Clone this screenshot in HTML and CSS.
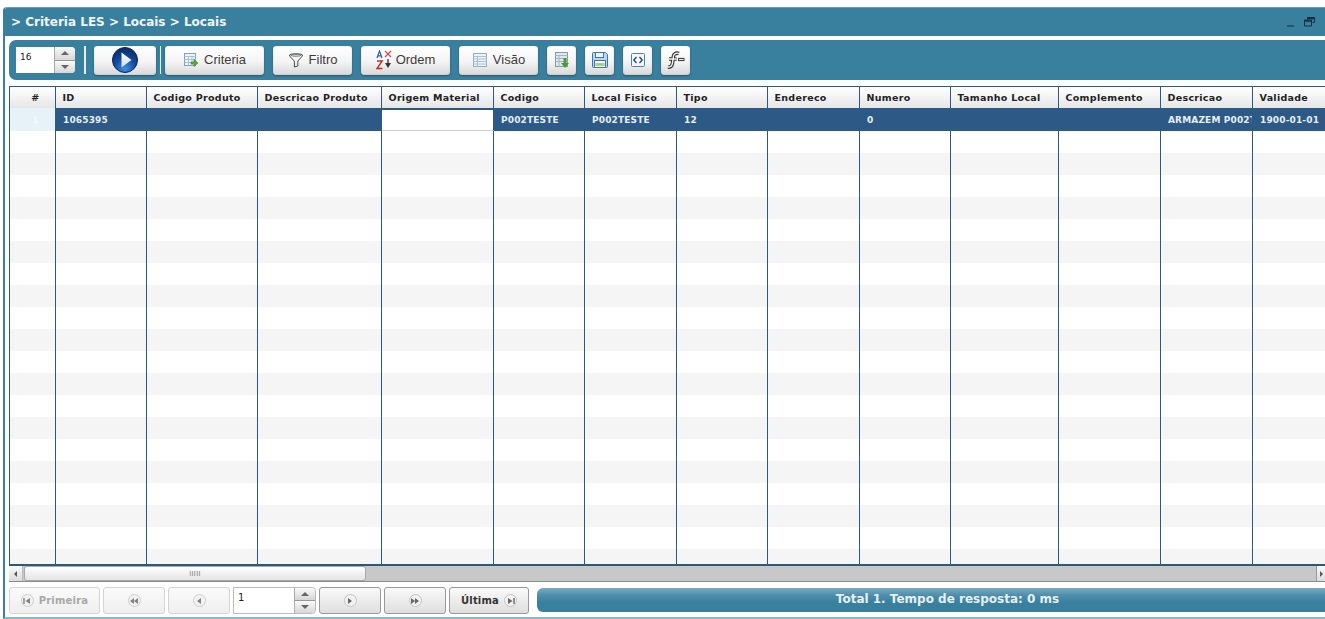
FILE: index.html
```html
<!DOCTYPE html>
<html lang="pt">
<head>
<meta charset="utf-8">
<title>Criteria LES</title>
<link rel="stylesheet" href="styles.css">
</head>
<body>
<div class="panel">
  <header class="title">
    <span class="title-text">&gt; Criteria LES &gt; Locais &gt; Locais</span>
    <span class="win-tools">
      <svg width="10" height="10" viewBox="0 0 10 10"><path d="M1 9h7" stroke="#12303f" stroke-width="1"/></svg>
      <svg width="11" height="10" viewBox="0 0 11 10"><path d="M3.500 2.500V.5h7v5h-2M.5 3h7v6h-7z" fill="none" stroke="#12303f"/><path d="M3 1.500h7M0 4h8" stroke="#12303f" stroke-width="1.400"/></svg>
    </span>
  </header>

  <div class="toolbar">
    <div class="spin spin-top">
      <span class="spin-value">16</span>
      <span class="spin-btns">
        <span class="spin-btn"><i class="arrow-up"></i></span>
        <span class="spin-btn"><i class="arrow-down"></i></span>
      </span>
    </div>
    <span class="sep sep-a"></span>
    <button class="btn btn-run">
      <svg width="28" height="28" viewBox="0 0 28 28">
        <defs>
          <radialGradient id="ballg" cx=".5" cy=".85" r=".85"><stop offset="0" stop-color="#3f8fe6"/><stop offset=".5" stop-color="#124a9e"/><stop offset="1" stop-color="#0a2a63"/></radialGradient>
          <linearGradient id="playg" x1="0" y1="0" x2="0" y2="1"><stop offset="0" stop-color="#ffffff"/><stop offset="1" stop-color="#cfe0f5"/></linearGradient>
        </defs>
        <circle cx="14" cy="14" r="12.500" fill="url(#ballg)" stroke="#0b2452"/>
        <path d="M10.500 6.500 20.500 14 10.500 21.500z" fill="url(#playg)"/>
      </svg>
    </button>
    <span class="sep sep-b"></span>
    <button class="btn btn-criteria">
      <svg width="16" height="16" viewBox="0 0 16 16"><rect x="1.500" y="1.500" width="11" height="12" fill="#eef3f8" stroke="#7f9fbf"/><path d="M1.500 4.500h11M1.500 7.500h11M1.500 10.500h11M5.500 4.500v9M9 4.500v9" stroke="#a9c0d6"/><path d="M8 10h3V7.500l4 3.500-4 3.500V12H8z" fill="#5aa83a" stroke="#3d7f24" stroke-width=".6"/></svg>
      <span class="btn-label">Criteria</span>
    </button>
    <button class="btn btn-filtro">
      <svg width="16" height="16" viewBox="0 0 16 16"><path d="M1.500 3C1.500 1.500 14.500 1.500 14.500 3 14.500 5 10 8 9.800 9.500V14L6.400 15V9.500C6 8 1.500 5 1.500 3z" fill="#f4f4f4" stroke="#444"/><ellipse cx="8" cy="3.200" rx="5" ry="1" fill="none" stroke="#777"/></svg>
      <span class="btn-label">Filtro</span>
    </button>
    <button class="btn btn-ordem">
      <svg width="16" height="20" viewBox="0 0 16 20"><path d="M1 8 3.500 1 6 8M2 5.800h3" fill="none" stroke="#2a5fb8" stroke-width="1.200"/><path d="M1 11h5.200L1 18.500h5.400" fill="none" stroke="#c02a2a" stroke-width="1.400"/><path d="M9 1l6 6M15 1 9 7" stroke="#c04a4a" stroke-width="1.100"/><path d="M12 9v5" stroke="#333" stroke-width="1.300"/><path d="M9 13h6L12 18z" fill="#333"/></svg>
      <span class="btn-label">Ordem</span>
    </button>
    <button class="btn btn-visao">
      <svg width="16" height="16" viewBox="0 0 16 16"><rect x="1.500" y="1.500" width="13" height="13" fill="#eef3f8" stroke="#8fb0cc"/><path d="M1.500 4.500h13M1.500 7h13M1.500 9.500h13M1.500 12h13M5.500 4.500v10" stroke="#a9c0d6"/></svg>
      <span class="btn-label">Visão</span>
    </button>
    <button class="btn btn-icon">
      <svg width="16" height="18" viewBox="0 0 16 18"><rect x="1.500" y="1.500" width="12" height="14" fill="#dfe8ef" stroke="#7f9fa8"/><path d="M1.500 4.500h12M1.500 7.500h12M1.500 10.500h12M5 4.500v11" stroke="#a3b8c4"/><path d="M9.500 7h3v5H15l-4 5-4-5h2.500z" fill="#4f9a35"/></svg>
    </button>
    <button class="btn btn-icon">
      <svg width="18" height="18" viewBox="0 0 18 18"><path d="M1.500 2.500a1 1 0 0 1 1-1h12l2 2v12a1 1 0 0 1-1 1h-13a1 1 0 0 1-1-1z" fill="#bcd6f2" stroke="#3f74b5"/><rect x="4.500" y="1.500" width="8" height="5" fill="#eef5fc" stroke="#3f74b5"/><rect x="3.500" y="9.500" width="11" height="7" fill="#fff" stroke="#3f74b5"/><rect x="4.500" y="12" width="9" height="3" fill="#a6d07a"/></svg>
    </button>
    <button class="btn btn-icon">
      <svg width="16" height="16" viewBox="0 0 16 16"><rect x="1.500" y="1.500" width="13" height="13" rx="1" fill="#f3f7fc" stroke="#4f7fb8"/><path d="M6.500 5 3.800 8l2.700 3M9.500 5l2.700 3-2.700 3" fill="none" stroke="#23406b" stroke-width="1.300"/></svg>
    </button>
    <button class="btn btn-icon">
      <svg width="20" height="18" viewBox="0 0 20 18">
        <path d="M2 16c3 .5 4-1 4.500-4l1-7c.3-2 2.500-3.500 5.500-2.500M3 8h7.500" fill="none" stroke="#333" stroke-width="3.600"/>
        <path d="M2 16c3 .5 4-1 4.500-4l1-7c.3-2 2.500-3.500 5.500-2.500M3 8h7.500" fill="none" stroke="#f4f4f4" stroke-width="1.400"/>
        <path d="M12 8.500h6.500" stroke="#333" stroke-width="3.200"/>
        <path d="M12.800 8.500h4.900" stroke="#e8e8e8" stroke-width="1.200"/>
      </svg>
    </button>
  </div>

  <div class="grid">
    <table class="data">
      <colgroup>
        <col class="c1"><col class="c2"><col class="c3"><col class="c4"><col class="c5"><col class="c6"><col class="c7"><col class="c8"><col class="c9"><col class="c10"><col class="c11"><col class="c12"><col class="c13"><col class="c14">
      </colgroup>
      <thead>
        <tr><th class="num">#</th><th>ID</th><th>Codigo Produto</th><th>Descricao Produto</th><th>Origem Material</th><th>Codigo</th><th>Local Fisico</th><th>Tipo</th><th>Endereco</th><th>Numero</th><th>Tamanho Local</th><th>Complemento</th><th>Descricao</th><th>Validade</th></tr>
      </thead>
      <tbody>
        <tr class="selected"><td class="num">1</td><td>1065395</td><td></td><td></td><td class="active"></td><td>P002TESTE</td><td>P002TESTE</td><td>12</td><td></td><td>0</td><td></td><td></td><td class="clip">ARMAZEM P002TESTE</td><td>1900-01-01</td></tr>
        <tr><td class="num"></td><td></td><td></td><td></td><td></td><td></td><td></td><td></td><td></td><td></td><td></td><td></td><td></td><td></td></tr>
        <tr><td class="num"></td><td></td><td></td><td></td><td></td><td></td><td></td><td></td><td></td><td></td><td></td><td></td><td></td><td></td></tr>
        <tr><td class="num"></td><td></td><td></td><td></td><td></td><td></td><td></td><td></td><td></td><td></td><td></td><td></td><td></td><td></td></tr>
        <tr><td class="num"></td><td></td><td></td><td></td><td></td><td></td><td></td><td></td><td></td><td></td><td></td><td></td><td></td><td></td></tr>
        <tr><td class="num"></td><td></td><td></td><td></td><td></td><td></td><td></td><td></td><td></td><td></td><td></td><td></td><td></td><td></td></tr>
        <tr><td class="num"></td><td></td><td></td><td></td><td></td><td></td><td></td><td></td><td></td><td></td><td></td><td></td><td></td><td></td></tr>
        <tr><td class="num"></td><td></td><td></td><td></td><td></td><td></td><td></td><td></td><td></td><td></td><td></td><td></td><td></td><td></td></tr>
        <tr><td class="num"></td><td></td><td></td><td></td><td></td><td></td><td></td><td></td><td></td><td></td><td></td><td></td><td></td><td></td></tr>
        <tr><td class="num"></td><td></td><td></td><td></td><td></td><td></td><td></td><td></td><td></td><td></td><td></td><td></td><td></td><td></td></tr>
        <tr><td class="num"></td><td></td><td></td><td></td><td></td><td></td><td></td><td></td><td></td><td></td><td></td><td></td><td></td><td></td></tr>
        <tr><td class="num"></td><td></td><td></td><td></td><td></td><td></td><td></td><td></td><td></td><td></td><td></td><td></td><td></td><td></td></tr>
        <tr><td class="num"></td><td></td><td></td><td></td><td></td><td></td><td></td><td></td><td></td><td></td><td></td><td></td><td></td><td></td></tr>
        <tr><td class="num"></td><td></td><td></td><td></td><td></td><td></td><td></td><td></td><td></td><td></td><td></td><td></td><td></td><td></td></tr>
        <tr><td class="num"></td><td></td><td></td><td></td><td></td><td></td><td></td><td></td><td></td><td></td><td></td><td></td><td></td><td></td></tr>
        <tr><td class="num"></td><td></td><td></td><td></td><td></td><td></td><td></td><td></td><td></td><td></td><td></td><td></td><td></td><td></td></tr>
        <tr><td class="num"></td><td></td><td></td><td></td><td></td><td></td><td></td><td></td><td></td><td></td><td></td><td></td><td></td><td></td></tr>
        <tr><td class="num"></td><td></td><td></td><td></td><td></td><td></td><td></td><td></td><td></td><td></td><td></td><td></td><td></td><td></td></tr>
        <tr><td class="num"></td><td></td><td></td><td></td><td></td><td></td><td></td><td></td><td></td><td></td><td></td><td></td><td></td><td></td></tr>
        <tr><td class="num"></td><td></td><td></td><td></td><td></td><td></td><td></td><td></td><td></td><td></td><td></td><td></td><td></td><td></td></tr>
        <tr><td class="num"></td><td></td><td></td><td></td><td></td><td></td><td></td><td></td><td></td><td></td><td></td><td></td><td></td><td></td></tr>
      </tbody>
    </table>
  </div>

  <div class="hscroll">
    <span class="hs-btn hs-left"><i class="arrow-left"></i></span>
    <span class="hs-thumb"><span class="grip">IIIII</span></span>
    <span class="hs-btn hs-right"><i class="arrow-right"></i></span>
  </div>

  <footer class="pager">
    <button class="pbtn p-first dim">
      <span class="pico"><svg width="8" height="8" viewBox="0 0 8 8"><path d="M1 1v6" stroke="#666" stroke-width="1.400"/><path d="M7 1v6L2.500 4z" fill="#666"/></svg></span>
      Primeira
    </button>
    <button class="pbtn p-mid dim"><span class="pico"><svg width="8" height="8" viewBox="0 0 8 8"><path d="M4 1v6L0 4zM8 1v6L4 4z" fill="#666"/></svg></span></button>
    <button class="pbtn p-mid dim"><span class="pico"><svg width="8" height="8" viewBox="0 0 8 8"><path d="M6 1v6L2 4z" fill="#666"/></svg></span></button>
    <div class="spin spin-page">
      <span class="spin-value">1</span>
      <span class="spin-btns">
        <span class="spin-btn"><i class="arrow-up"></i></span>
        <span class="spin-btn"><i class="arrow-down"></i></span>
      </span>
    </div>
    <button class="pbtn p-mid"><span class="pico"><svg width="8" height="8" viewBox="0 0 8 8"><path d="M2 1v6l4-3z" fill="#666"/></svg></span></button>
    <button class="pbtn p-mid"><span class="pico"><svg width="8" height="8" viewBox="0 0 8 8"><path d="M0 1v6l4-3zM4 1v6l4-3z" fill="#666"/></svg></span></button>
    <button class="pbtn p-last">
      Última
      <span class="pico"><svg width="8" height="8" viewBox="0 0 8 8"><path d="M7 1v6" stroke="#666" stroke-width="1.400"/><path d="M1 1v6l4.500-3z" fill="#666"/></svg></span>
    </button>
    <div class="status">Total 1. Tempo de resposta: 0 ms</div>
  </footer>
</div>
</body>
</html>
```
FILE: styles.css
```css
* { box-sizing: border-box; }
html, body { margin: 0; height: 100%; overflow: hidden; background: #fff; }
body { font-family: "DejaVu Sans", sans-serif; font-size: 10px; }

.panel {
  margin: 7px 0 0 3px;
  width: 1322px;
  height: 612px;
  border-left: 2px solid #3a7f9f;
  border-bottom: 2px solid #8db6c8;
  border-top-left-radius: 4px;
  display: flex;
  flex-direction: column;
}

.title {
  flex: 0 0 29px;
  background: #39809f;
  display: flex;
  align-items: center;
  justify-content: space-between;
  padding: 0 10px 1px 6px;
  border-top: 1px solid #6a9db5;
  border-top-left-radius: 3px;
}
.title-text { color: #f1f6f9; font-size: 12px; font-weight: bold; }
.win-tools { display: flex; gap: 8px; align-items: center; }

.toolbar {
  margin: 4px 0 0 4px;
  flex: 0 0 40px;
  background: #39809f;
  border-radius: 7px 0 0 7px;
  display: flex;
  align-items: center;
  padding-left: 7px;
}

.spin { display: flex; background: #fff; }
.spin-value { flex: 1; font-size: 9px; color: #222; padding: 5px 0 0 4px; }
.spin-btns {
  flex: 0 0 21px;
  display: flex;
  flex-direction: column;
  border-left: 1px solid #aaa;
  border-radius: 0 4px 4px 0;
  overflow: hidden;
}
.spin-btn {
  flex: 1;
  background: linear-gradient(#fafafa, #d6d6d6);
  display: flex;
  align-items: center;
  justify-content: center;
  border-bottom: 1px solid #999;
}
.spin-btn:last-child { border-bottom: 0; }
.arrow-up { border: 4px solid transparent; border-top: 0; border-bottom-color: #666; }
.arrow-down { border: 4px solid transparent; border-bottom: 0; border-top-color: #666; }
.spin-top { width: 59px; height: 26px; border-radius: 0 4px 4px 0; }

.sep { width: 2px; height: 28px; background: #e6eff3; }
.sep-a { margin: 0 8px 0 9px; }
.sep-b { margin: 0 4px; width: 1px; }

.btn {
  height: 29px;
  border: 0;
  padding: 0;
  border-radius: 3px;
  background: linear-gradient(#ffffff 0%, #f4f4f4 55%, #d8d8d8 100%);
  box-shadow: inset 0 0 1px rgba(0, 0, 0, .4), 0 1px 2px rgba(0, 0, 0, .35);
  font-family: "Liberation Sans", sans-serif;
  font-size: 13px;
  color: #3c3c3c;
  display: flex;
  align-items: center;
  justify-content: center;
  gap: 5px;
  margin-right: 9px;
}
.btn-label { padding-bottom: 2px; }
.btn-run { width: 62px; margin-right: 0; }
.btn-criteria { width: 99px; }
.btn-filtro, .btn-visao { width: 79px; }
.btn-ordem { width: 89px; gap: 4px; }
.btn-icon { width: 29px; }

.grid {
  margin: 6px 0 0 4px;
  flex: 0 0 480px;
  overflow: hidden;
  border-top: 1px solid #2c5a7c;
  border-left: 1px solid #2c5a7c;
  border-bottom: 2px solid #2c5a7c;
}
.data {
  border-collapse: separate;
  border-spacing: 0;
  table-layout: fixed;
  width: 1335px;
}
.c1 { width: 46px; } .c2 { width: 91px; } .c3 { width: 111px; } .c4 { width: 124px; }
.c5 { width: 112px; } .c6 { width: 91px; } .c7 { width: 92px; } .c8 { width: 91px; }
.c9 { width: 92px; } .c10 { width: 91px; } .c11 { width: 108px; } .c12 { width: 102px; }
.c13 { width: 92px; } .c14 { width: 92px; }

th {
  height: 21px;
  padding: 0 6px 0 6.500px;
  text-align: left;
  font-size: 9.500px;
  letter-spacing: .3px;
  color: #222;
  background: linear-gradient(#ffffff, #e6e6e6);
  border-right: 1px solid #2c5a7c;
  white-space: nowrap;
  overflow: hidden;
}
th.num, td.num { text-align: center; padding: 0 0 0 6px; }
td {
  height: 22px;
  padding: 0 0 0 7px;
  border-right: 1px solid #2c5a7c;
  white-space: nowrap;
  overflow: hidden;
  font-size: 9px;
  font-weight: bold;
  letter-spacing: .15px;
}
tbody tr:nth-child(even) td { background: #fff; }
tbody tr:nth-child(odd) td { background: #f5f5f5; }
tbody tr.selected td { height: 23px; background: #2c5986; color: #e6eef5; border-right-color: #2c5986; }
tbody tr.selected td.num { background: #e6f2f8; color: #f4f9fb; border-right-color: #2c5a7c; }
tbody tr.selected td.active { background: #fff; border-top: 2px solid #2c5a7c; border-bottom: 1px solid #d0d0d0; border-right-color: #2c5a7c; }
tbody td.num { background: #fff; }
td.clip { text-overflow: clip; }

.hscroll {
  margin-left: 4px;
  flex: 0 0 16px;
  background: #c8c8c8;
  border-bottom: 1px solid #8a8a8a;
  display: flex;
  align-items: stretch;
}
.hs-btn {
  background: linear-gradient(#fafafa, #dcdcdc);
  display: flex;
  align-items: center;
  justify-content: center;
}
.hs-left { width: 14px; border-right: 1px solid #bbb; }
.hs-right { width: 9px; margin-left: auto; border-left: 1px solid #999; }
.arrow-left { border: 3px solid transparent; border-left: 0; border-right: 3px solid #555; }
.arrow-right { border: 3px solid transparent; border-right: 0; border-left: 3px solid #555; }
.hs-thumb {
  width: 342px;
  margin-left: 1px;
  background: linear-gradient(#fff, #e4e4e4);
  border: 1px solid #aaa;
  border-radius: 3px;
  display: flex;
  align-items: center;
  justify-content: center;
}
.grip { font-family: "Liberation Sans", sans-serif; font-size: 7px; color: #777; letter-spacing: .4px; }

.pager {
  flex: 0 0 27px;
  margin: 5px 0 0 4px;
  display: flex;
  align-items: stretch;
  gap: 3px;
}
.pbtn {
  border: 1px solid #999;
  border-radius: 3px;
  background: linear-gradient(#fafafa, #dedede);
  padding: 0;
  font-family: "DejaVu Sans", sans-serif;
  font-size: 10px;
  font-weight: bold;
  letter-spacing: .2px;
  color: #333;
  display: flex;
  align-items: center;
  justify-content: center;
  gap: 5px;
}
.pbtn.dim { color: #a8a8a8; border-color: #d4d4d4; background: linear-gradient(#fafafa, #efefef); }
.dim .pico { opacity: .8; }
.p-first { width: 91px; }
.p-mid { width: 62px; }
.p-last { width: 80px; }
.pico {
  width: 13px;
  height: 13px;
  border: 1px solid #c4c4c4;
  border-radius: 50%;
  background: #f2f2f2;
  display: flex;
  align-items: center;
  justify-content: center;
}
.spin-page { width: 83px; border: 1px solid #bbb; border-radius: 0 4px 4px 0; }
.spin-page .spin-value { font-size: 10px; padding: 4px 0 0 4px; font-weight: normal; }

.status {
  flex: 1;
  margin: 1px 0 2px 5px;
  background: linear-gradient(#7cabc2 0%, #4e8eab 30%, #39809f 60%);
  border-radius: 6px 0 0 6px;
  color: #e6f0f4;
  font-size: 12px;
  font-weight: bold;
  display: flex;
  align-items: center;
  justify-content: center;
  padding: 0 0 2px 33px;
}
```
